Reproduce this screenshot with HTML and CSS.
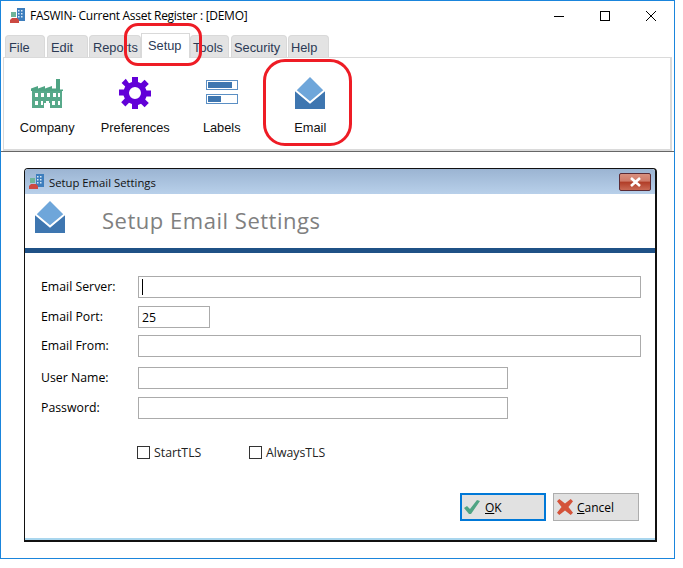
FILE: index.html
```html
<!DOCTYPE html>
<html lang="en">
<head>
<meta charset="utf-8">
<title>FASWIN</title>
<link rel="stylesheet" href="styles.css">
</head>
<body>
<svg class="defs" width="0" height="0" aria-hidden="true">
  <defs>
    <symbol id="app" viewBox="0 0 16 16">
      <rect x="7" y="0" width="8" height="13" fill="#3d7ebd"/>
      <path d="M8 2h1.500v1.500H8zM11 2h1.500v1.500H11zM8 5h1.500v1.500H8zM11 5h1.500v1.500H11zM8 8h1.500v1.500H8zM11 8h1.500v1.500H11z" fill="#d8e8f5"/>
      <rect x="1" y="4" width="5" height="5" fill="#6fb59a"/>
      <path d="M0 15v-3l2-2h5l2 2v3z" fill="#cc4a42"/>
    </symbol>
    <symbol id="mail" viewBox="0 0 30 32">
      <path d="M15 0 30 15 15 27 0 15z" fill="#6ea6da"/>
      <path d="M0 13.500 15 26.500 30 13.500V32H0z" fill="#3e76b0"/>
      <path d="M0 13 15 25.500 30 13" fill="none" stroke="#fff" stroke-width="2"/>
    </symbol>
  </defs>
</svg>
<div class="window">
  <header class="titlebar">
    <svg class="app-icon"><use href="#app"/></svg>
    <span class="title">FASWIN- Current Asset Register : [DEMO]</span>
    <div class="controls">
      <svg width="12" height="12" viewBox="0 0 12 12"><path d="M1 6.500h10" stroke="#000" fill="none"/></svg>
      <svg width="12" height="12" viewBox="0 0 12 12"><rect x="1.500" y="1.500" width="9" height="9" stroke="#000" fill="none"/></svg>
      <svg width="12" height="12" viewBox="0 0 12 12"><path d="M1 1l10 10M11 1 1 11" stroke="#000" fill="none"/></svg>
    </div>
  </header>
  <nav class="tabs">
    <span class="tab tab-file">File</span>
    <span class="tab tab-edit">Edit</span>
    <span class="tab tab-reports">Reports</span>
    <span class="tab tab-setup">Setup</span>
    <span class="tab tab-tools">Tools</span>
    <span class="tab tab-security">Security</span>
    <span class="tab tab-help">Help</span>
  </nav>
  <section class="ribbon">
    <div class="ribbon-item">
      <svg class="ribbon-icon" width="32" height="32" viewBox="0 0 32 32">
        <path d="M0 11.500 7 9v2.500L14 9v2.500L21 9v2.500h4V2h4v10.500h3V14H0z" fill="#4fa484"/>
        <path d="M1 14h30v17H19v-5h-6v5H1z" fill="#57a98a"/>
        <path d="M4 16h3v4H4zM10 16h3v4h-3zM16 16h3v4h-3zM22 16h3v4h-3zM27 16h2v4h-2zM4 24h3v4H4zM10 24h2v4h-2zM21 24h3v4h-3zM27 24h2v4h-2zM15 24h3v4h-3z" fill="#fff"/>
      </svg>
      <span>Company</span>
    </div>
    <div class="ribbon-item">
      <svg class="ribbon-icon" width="32" height="32" viewBox="0 0 32 32">
        <path fill-rule="evenodd" fill="#6200d8" d="M13 0h6v5l3 1.300 3.600-3.600 4.200 4.200L26.200 10.500l1.300 3H32v6h-4.500l-1.300 3 3.600 3.600-4.200 4.200-3.600-3.600-3 1.300V32h-6v-4.900l-3-1.300-3.600 3.600-4.200-4.200 3.600-3.600-1.300-3H0v-6h4.900l1.300-3-3.600-3.600 4.200-4.200L10 6.300 13 5zM16 10a6 6 0 1 0 0 12 6 6 0 0 0 0-12z"/>
      </svg>
      <span>Preferences</span>
    </div>
    <div class="ribbon-item ribbon-labels">
      <svg class="ribbon-icon" width="32" height="32" viewBox="0 0 32 32">
        <rect x="0.500" y="3.500" width="31" height="9" fill="#fff" stroke="#5b8fc4"/>
        <rect x="2" y="5" width="24" height="6" fill="#3e76b0"/>
        <rect x="0.500" y="17.500" width="31" height="9" fill="#fff" stroke="#5b8fc4"/>
        <rect x="2" y="19" width="13" height="6" fill="#3e76b0"/>
      </svg>
      <span>Labels</span>
    </div>
    <div class="ribbon-item">
      <svg class="ribbon-icon" width="30" height="32"><use href="#mail"/></svg>
      <span>Email</span>
    </div>
  </section>
  <main class="workspace">
    <div class="dialog">
      <div class="dialog-title">
        <svg class="dialog-app"><use href="#app"/></svg>
        <span class="dialog-name">Setup Email Settings</span>
        <span class="close-btn">
          <svg width="13" height="10" viewBox="0 0 13 10"><path d="M2 1l9 8M11 1 2 9" stroke="#fff" stroke-width="2.600" fill="none"/></svg>
        </span>
      </div>
      <div class="dialog-head">
        <svg class="head-icon" width="30" height="32"><use href="#mail"/></svg>
        <h1>Setup Email Settings</h1>
      </div>
      <div class="head-rule"></div>
      <form class="form">
        <label class="row row-server"><span>Email Server:</span><span class="field field-wide"><i class="caret"></i></span></label>
        <label class="row row-port"><span>Email Port:</span><span class="field field-port">25</span></label>
        <label class="row row-from"><span>Email From:</span><span class="field field-wide"></span></label>
        <label class="row row-user"><span>User Name:</span><span class="field field-mid"></span></label>
        <label class="row row-pass"><span>Password:</span><span class="field field-mid"></span></label>
        <div class="checks">
          <label class="check check-start"><i class="box"></i>StartTLS</label>
          <label class="check"><i class="box"></i>AlwaysTLS</label>
        </div>
        <div class="buttons">
          <span class="btn btn-ok">
            <svg width="18" height="16" viewBox="0 0 18 16"><path d="M1 9l3-2 3 3 7-9 3 1-9 13H6z" fill="#4fa484"/></svg>
            <span><u>O</u>K</span>
          </span>
          <span class="btn">
            <svg width="16" height="16" viewBox="1 1 14 14"><path d="M1 3l2-2 5 4 5-4 2 2-4 5 4 5-2 2-5-4-5 4-2-2 4-5z" fill="#d4533a"/></svg>
            <span><u>C</u>ancel</span>
          </span>
        </div>
      </form>
    </div>
  </main>
</div>
<div class="callout callout-setup"></div>
<div class="callout callout-email"></div>
</body>
</html>
```
FILE: styles.css
```css
* { box-sizing: border-box; }
html, body { margin: 0; padding: 0; background: #fff; }
body { width: 683px; height: 568px; position: relative; overflow: hidden; font-family: "Open Sans", "Noto Sans", sans-serif; color: #000; }
.defs { position: absolute; }
.window { width: 675px; height: 559px; border: 1px solid #1a85dc; background: #fff; padding: 0 2px; display: flex; flex-direction: column; }
.titlebar { height: 32px; display: flex; align-items: center; padding-left: 7px; font-size: 12px; flex: none; }
.app-icon { width: 16px; height: 16px; margin-top: -3px; }
.title { margin-left: 4px; margin-top: -3px; letter-spacing: -.28px; }
.controls { margin-left: auto; display: flex; gap: 34px; padding-right: 15px; margin-top: -3px; }
.tabs { display: flex; height: 24px; flex: none; align-items: flex-end; padding-left: 2px; font: 12.800px "Liberation Sans", Arial, sans-serif; color: #2c3a55; position: relative; z-index: 1; }
.tab { height: 22px; background: #e3e3e3; border: 1px solid #d9d9d9; border-bottom: none; border-radius: 4px 4px 0 0; padding: 4px 0 0 3px; margin-right: 2px; }
.tab-file { width: 40px; }
.tab-edit { width: 41px; margin-right: 1px; }
.tab-reports { width: 52px; margin-right: 0; }
.tab-setup { width: 49px; background: #fff; border-radius: 0; padding: 4px 0 0 6px; margin-right: 0; margin-bottom: -1px; height: 25px; }
.tab-tools { width: 39px; padding-left: 2px; }
.tab-security { width: 56px; margin-right: 1px; padding-left: 2px; }
.tab-help { width: 41px; padding-left: 2px; }
.ribbon { height: 94px; flex: none; border: 1px solid #dadada; border-width: 1px 2px 2px 1px; display: flex; font: 12.800px "Liberation Sans", Arial, sans-serif; color: #111; width: 669px; }
.ribbon-item { width: 87.500px; display: flex; flex-direction: column; align-items: center; padding-top: 19px; }
.ribbon-item:first-child { margin-left: -.5px; margin-right: .5px; }
.ribbon-labels { margin-left: -1px; margin-right: 1px; }
.ribbon-icon { display: block; height: 32px; }
.ribbon-item span { margin-top: 11px; }
.workspace { border-top: 1px solid #666; margin: 0 -2px; padding: 16px 0 0 23px; flex: 1; }
.dialog { width: 633px; height: 374px; border: 1px solid #111; border-width: 1px 2px 2px 1px; border-radius: 4px 4px 0 0; background: #fff; box-shadow: inset 0 -2px 0 #a9d6ee; display: flex; flex-direction: column; font-size: 12.300px; }
.dialog-title { height: 25px; flex: none; display: flex; align-items: center; padding-left: 4px; background: linear-gradient(#9bb4d2, #b8d0ea); color: #111; font-size: 11.300px; border-radius: 3px 3px 0 0; }
.dialog-app { width: 16px; height: 16px; margin-right: 4px; }
.dialog-name { padding-top: 2px; }
.close-btn { margin-left: auto; margin-right: 4px; width: 32px; height: 18px; display: flex; align-items: center; justify-content: center; border: 1px solid #5b2b35; border-radius: 2px; background: linear-gradient(#d8907f 0, #cf7a68 45%, #b03c26 50%, #c96a55 100%); }
.dialog-head { height: 54px; flex: none; display: flex; align-items: flex-start; padding: 7px 0 0 10px; }
.head-icon { display: block; }
.dialog-head h1 { margin: 4px 0 0 37px; font-size: 22px; line-height: 30px; font-weight: 400; color: #808080; letter-spacing: .52px; }
.head-rule { height: 5px; flex: none; background: #1f5186; }
.form { flex: 1; display: flex; flex-direction: column; padding: 23px 0 0 16px; }
.row { display: flex; align-items: center; height: 22px; }
.row > span:first-child { width: 97px; padding-bottom: 1px; }
.row-port { margin-top: 8px; }
.row-from { margin-top: 7px; }
.row-user { margin-top: 10px; }
.row-pass { margin-top: 8px; }
.field { height: 22px; border: 1px solid #ababab; display: flex; align-items: center; padding: 0 0 0 3px; background: #fff; }
.field-wide { width: 503px; }
.field-port { width: 72px; }
.field-mid { width: 370px; }
.caret { width: 1px; height: 16px; background: #000; }
.checks { display: flex; margin-top: 26px; padding-left: 96px; }
.check { display: flex; align-items: center; color: #222; height: 14px; }
.check-start { width: 112px; }
.box { width: 13px; height: 13px; border: 1px solid #333; margin-right: 4px; background: #fff; }
.buttons { display: flex; gap: 7px; margin-top: 34px; padding-left: 419px; }
.btn { width: 86px; height: 28px; display: flex; align-items: center; gap: 4px; padding-left: 3px; background: #e1e1e1; border: 1px solid #adadad; font-size: 12px; }
.btn-ok { border: 2px solid #0078d7; padding-left: 1px; }
.callout { position: absolute; border: 3px solid #ee1c25; background: transparent; z-index: 5; }
.callout-setup { left: 124px; top: 23px; width: 78px; height: 43px; border-radius: 14px; }
.callout-email { left: 263px; top: 59px; width: 89px; height: 87px; border-radius: 22px; }
```
